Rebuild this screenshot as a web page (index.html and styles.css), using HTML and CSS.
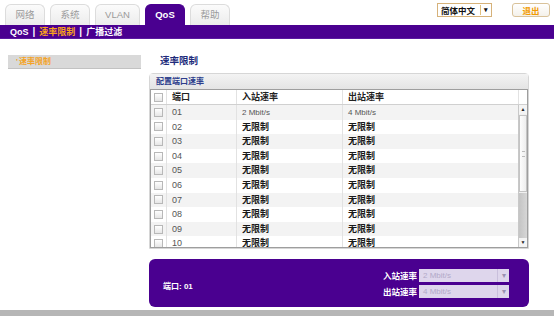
FILE: index.html
```html
<!DOCTYPE html>
<html lang="zh">
  <head>
    <meta charset="UTF-8" />
    <title>QoS - 速率限制</title>
    <link rel="stylesheet" href="styles.css">
  </head>
  <body>
    <div class="topbar">
      <div class="tabs">
        <div class="tab">网络</div>
        <div class="tab">系统</div>
        <div class="tab">VLAN</div>
        <div class="tab active">QoS</div>
        <div class="tab">帮助</div>
      </div>
      <div class="top-right">
        <div class="lang-select">
          <span class="lang-text">简体中文</span>
          <span class="lang-arrow">▾</span>
        </div>
        <button class="logout-btn">退出</button>
      </div>
    </div>

    <div class="subnav">
      <span>QoS</span>
      <span class="sep">|</span>
      <span class="current">速率限制</span>
      <span class="sep">|</span>
      <span>广播过滤</span>
    </div>

    <div class="page">
      <div class="sidebar">
        <div class="side-item"><span class="mark">'</span>速率限制</div>
      </div>

      <div class="main">
        <h2 class="page-title">速率限制</h2>

        <div class="panel">
          <div class="panel-head">配置端口速率</div>
          <div class="grid">
            <div class="row head-row">
              <div class="cell c-check"><span class="box"></span></div>
              <div class="cell c-port">端口</div>
              <div class="cell c-in">入站速率</div>
              <div class="cell c-out">出站速率</div>
              <div class="cell c-pad"></div>
            </div>
            <div class="grid-body">
              <div class="rows" id="rows"></div>
              <div class="scrollbar">
                <div class="sb-btn">▲</div>
                <div class="sb-thumb"><span class="grip"></span></div>
                <div class="sb-track"></div>
                <div class="sb-btn">▼</div>
              </div>
            </div>
          </div>
        </div>

        <div class="edit-box">
          <div class="edit-port">端口: 01</div>
          <div class="edit-fields">
            <label class="field-label">入站速率</label>
            <div class="fake-select"><span>2 Mbit/s</span><span class="arr">▾</span></div>
            <label class="field-label">出站速率</label>
            <div class="fake-select"><span>4 Mbit/s</span><span class="arr">▾</span></div>
          </div>
        </div>
      </div>
    </div>

    <div class="footer-bar"></div>

    <script>
      const ports = [
        ["01", "2 Mbit/s", "4 Mbit/s"],
        ["02", "无限制", "无限制"],
        ["03", "无限制", "无限制"],
        ["04", "无限制", "无限制"],
        ["05", "无限制", "无限制"],
        ["06", "无限制", "无限制"],
        ["07", "无限制", "无限制"],
        ["08", "无限制", "无限制"],
        ["09", "无限制", "无限制"],
        ["10", "无限制", "无限制"],
      ];

      const rows = document.getElementById("rows");
      ports.forEach((p) => {
        const row = document.createElement("div");
        row.className = "row";
        const inCls = p[1] === "无限制" ? "cell c-in strong" : "cell c-in";
        const outCls = p[2] === "无限制" ? "cell c-out strong" : "cell c-out";
        row.innerHTML =
          '<div class="cell c-check"><span class="box"></span></div>' +
          '<div class="cell c-port">' + p[0] + "</div>" +
          '<div class="' + inCls + '">' + p[1] + "</div>" +
          '<div class="' + outCls + '">' + p[2] + "</div>";
        rows.appendChild(row);
      });
    </script>
  </body>
</html>
```

FILE: styles.css
```css
* {
  margin: 0;
  padding: 0;
  box-sizing: border-box;
}

body {
  width: 554px;
  height: 316px;
  overflow: hidden;
  background: #fff;
  font-family: "Liberation Sans", "Noto Sans CJK SC", sans-serif;
  font-size: 9px;
  color: #333;
}

/* top tabs */
.topbar {
  height: 25px;
  display: flex;
  justify-content: space-between;
}

.tabs {
  display: flex;
  gap: 5px;
  padding: 4px 0 0 5px;
}

.tab {
  width: 40px;
  height: 21px;
  line-height: 20px;
  text-align: center;
  font-size: 9.5px;
  color: #9a9a9a;
  background: linear-gradient(#fbfbfb, #ececec);
  border: 1px solid #dcdcdc;
  border-bottom: none;
  border-radius: 6px 6px 0 0;
}

.tab:nth-child(3) {
  width: 45px;
}

.tab.active {
  background: #4a0090;
  border-color: #4a0090;
  color: #fff;
  font-weight: bold;
}

.top-right {
  display: flex;
  align-items: flex-start;
  gap: 20px;
  padding: 3px 4px 0 0;
}

.lang-select {
  width: 55px;
  height: 14px;
  display: flex;
  align-items: center;
  border: 1px solid #d6b27a;
  background: #fff;
  font-weight: bold;
  color: #111;
}

.lang-text {
  flex: 1;
  padding-left: 3px;
  font-size: 8.5px;
  white-space: nowrap;
}

.lang-arrow {
  width: 11px;
  flex: none;
  text-align: center;
  border-left: 1px solid #e0c080;
  font-size: 7px;
  line-height: 10px;
}

.logout-btn {
  width: 38px;
  height: 14px;
  border: 1px solid #d9c29a;
  border-radius: 3px;
  background: linear-gradient(#fff, #f4f1ea);
  color: #f29a00;
  font-family: inherit;
  font-size: 8.5px;
  font-weight: bold;
}

/* purple sub navigation */
.subnav {
  height: 14px;
  background: #4a0090;
  border-bottom: 1px solid #5b1aa0;
  color: #fff;
  font-weight: bold;
  font-size: 9px;
  line-height: 14px;
  padding-left: 10px;
  display: flex;
  gap: 4px;
}

.subnav .sep {
  font-weight: bold;
  font-size: 10px;
}

.subnav .current {
  color: #f7a21b;
}

/* body */
.page {
  display: flex;
  padding: 16px 0 0 8px;
  height: 270px;
}

.sidebar {
  width: 133px;
}

.side-item {
  height: 14px;
  line-height: 14px;
  background: #d9d9d9;
  border-bottom: 1px solid #c2c2c2;
  padding-left: 8px;
  color: #f4a326;
  font-weight: bold;
  font-size: 8px;
}

.side-item .mark {
  margin-right: 1px;
}

.main {
  width: 380px;
  margin-left: 8px;
}

.page-title {
  font-size: 9.5px;
  font-weight: bold;
  color: #202a7a;
  padding-left: 11px;
  height: 18px;
  line-height: 11px;
}

.panel {
  border: 1px solid #d6d6d6;
  border-radius: 4px 4px 0 0;
}

.panel-head {
  height: 15px;
  line-height: 15px;
  padding-left: 6px;
  font-size: 8px;
  font-weight: bold;
  color: #2d3d8c;
  background: linear-gradient(#f3f3f3, #e4e4e4);
}

.grid {
  border: 1px solid #9e9e9e;
}

.row {
  display: flex;
  height: 14.6px;
  line-height: 15px;
}

.rows .row:nth-child(odd) {
  background: #f3f3f3;
}

.head-row {
  height: 15px;
  background: #fff;
  border-bottom: 1px solid #d0d0d0;
  font-weight: bold;
  color: #222;
}

.cell {
  height: 100%;
  padding-left: 5px;
  border-right: 1px solid #e2e2e2;
  white-space: nowrap;
  overflow: hidden;
}

.c-check {
  width: 16px;
  padding-left: 3px;
  display: flex;
  align-items: center;
}

.c-port {
  width: 70px;
  color: #555;
}

.head-row .c-port {
  color: #222;
}

.c-in {
  width: 106px;
  color: #555;
  font-size: 8px;
}

.c-out {
  flex: 1;
  color: #555;
  font-size: 8px;
  border-right: none;
}

.head-row .c-in,
.head-row .c-out {
  color: #222;
  font-size: 9px;
}

.c-pad {
  width: 9px;
  border-left: 1px solid #e2e2e2;
  border-right: none;
  flex: none;
  padding: 0;
}

.strong {
  font-weight: bold;
  color: #1a1a1a;
  font-size: 9px;
}

.box {
  width: 9px;
  height: 9px;
  border: 1px solid #b8b8b8;
  background: linear-gradient(#fff, #e6e6e6);
}

.grid-body {
  display: flex;
  height: 142px;
  overflow: hidden;
}

.rows {
  flex: 1;
}

.scrollbar {
  width: 9px;
  display: flex;
  flex-direction: column;
  border-left: 1px solid #c8c8c8;
  background: #f0f0f0;
}

.sb-btn {
  height: 9px;
  font-size: 5px;
  line-height: 9px;
  text-align: center;
  color: #222;
  background: #f4f4f4;
}

.sb-thumb {
  height: 77px;
  margin: 1px 0;
  border: 1px solid #c4c4c4;
  background: linear-gradient(90deg, #fdfdfd, #eeeeee);
  display: flex;
  align-items: center;
  justify-content: center;
}

.grip {
  width: 3px;
  height: 6px;
  border-top: 1px solid #bbb;
  border-bottom: 1px solid #bbb;
}

.sb-track {
  flex: 1;
  background: linear-gradient(90deg, #c4c4c4, #d6d6d6);
}

/* edit box */
.edit-box {
  margin-top: 10px;
  height: 48px;
  background: #4a0090;
  border-radius: 6px;
  display: flex;
  align-items: center;
  justify-content: space-between;
  padding: 0 20px 0 14px;
  color: #fff;
  font-weight: bold;
  font-size: 8px;
}

.edit-port {
  padding-top: 4px;
}

.edit-fields {
  display: grid;
  grid-template-columns: auto 90px;
  column-gap: 2px;
  row-gap: 3px;
  align-items: center;
  text-align: right;
}

.field-label {
  font-size: 8.5px;
}

.fake-select {
  height: 13px;
  display: flex;
  background: #ded6ec;
  color: #b2a9c8;
  font-weight: normal;
  font-size: 8px;
  line-height: 13px;
  text-align: left;
}

.fake-select span:first-child {
  flex: 1;
  padding-left: 4px;
}

.fake-select .arr {
  width: 12px;
  text-align: center;
  border-left: 1px solid #c9bfdc;
  color: #9a90b2;
}

.footer-bar {
  height: 7px;
  margin-top: 1px;
  background: #b6b6b6;
}
```
